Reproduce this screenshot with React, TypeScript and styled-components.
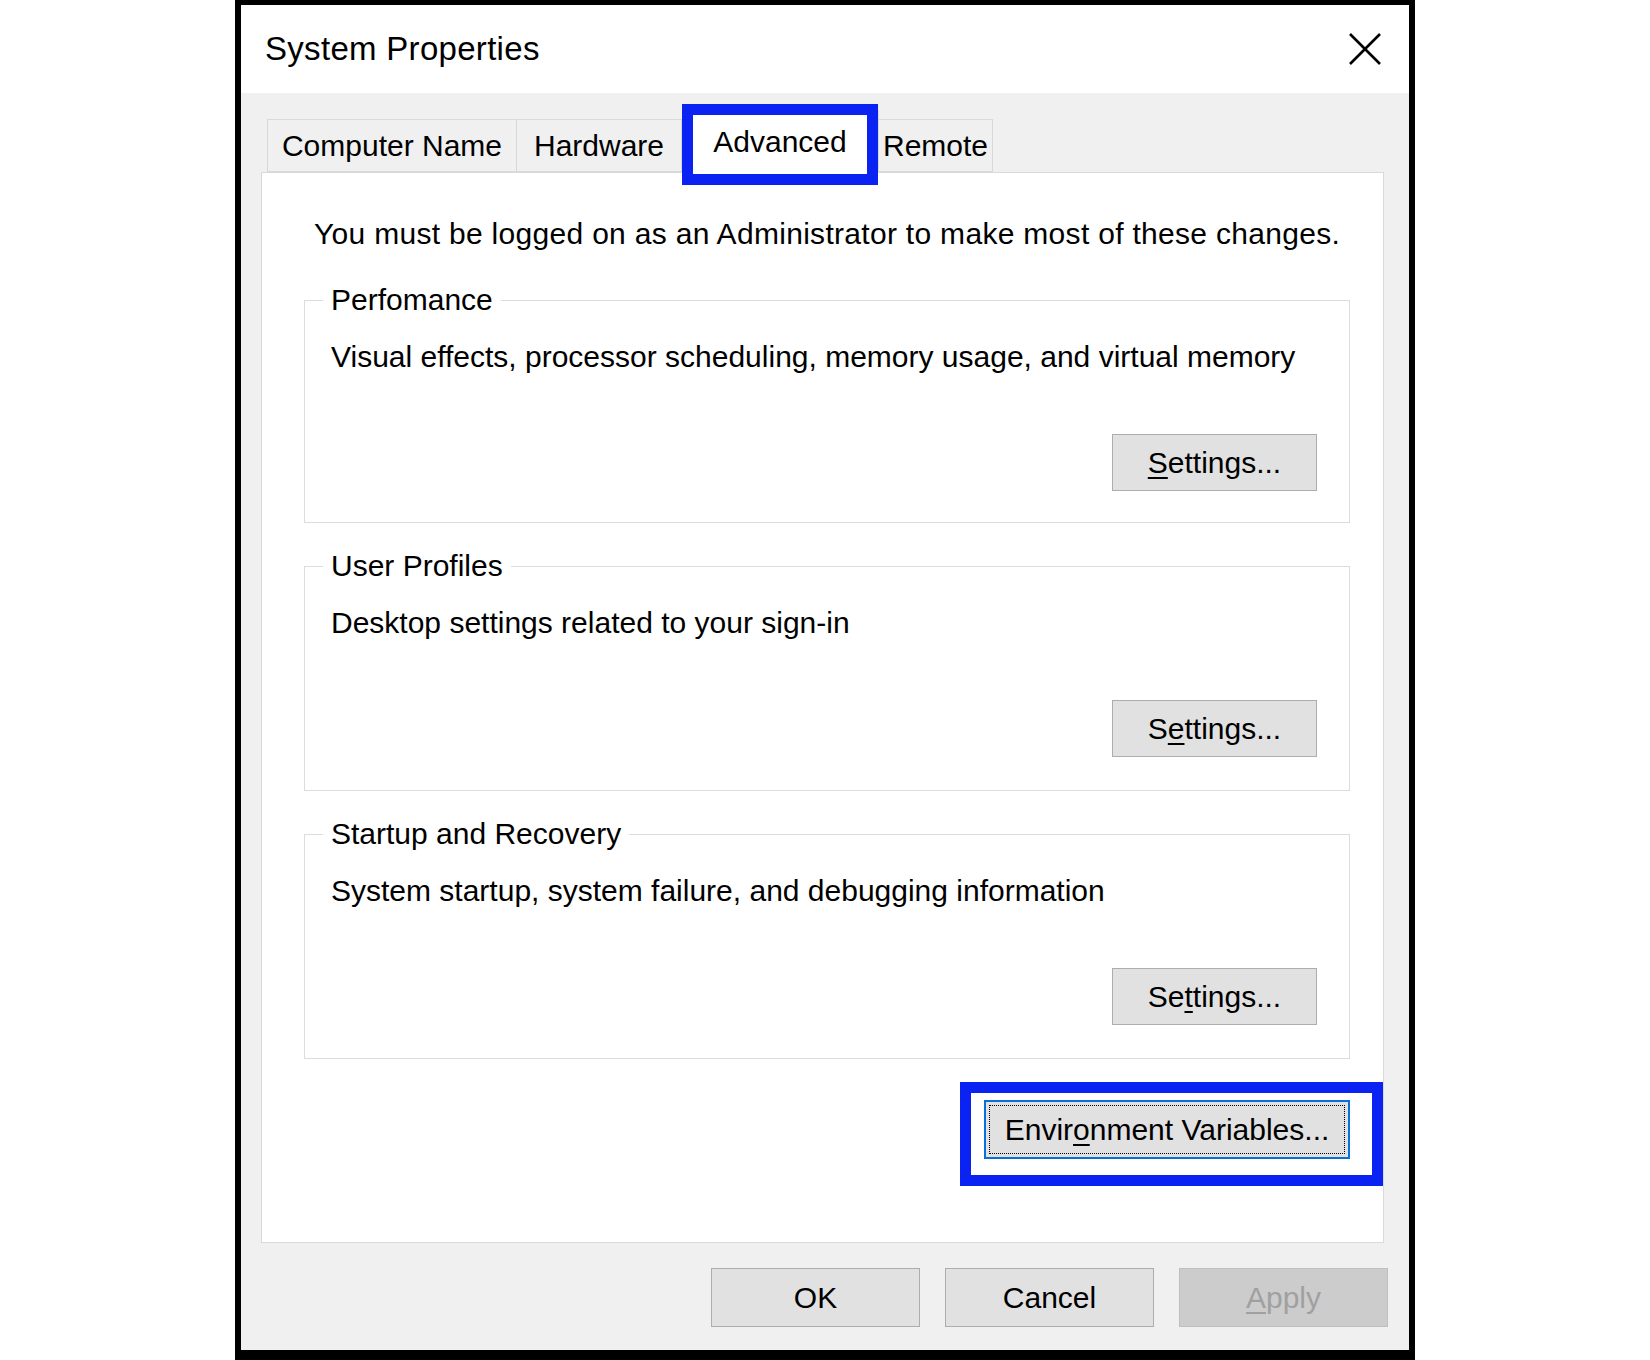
import React from "react";
import styled, { createGlobalStyle } from "styled-components";

const GlobalStyle = createGlobalStyle`
  body {
    margin: 0;
    background: #fff;
    font-family: "Liberation Sans", Arial, sans-serif;
    color: #000;
  }
`;

const groups = [
  {
    title: "Perfomance",
    desc: "Visual effects, processor scheduling, memory usage, and virtual memory",
    key: 0,
  },
  {
    title: "User Profiles",
    desc: "Desktop settings related to your sign-in",
    key: 1,
  },
  {
    title: "Startup and Recovery",
    desc: "System startup, system failure, and debugging information",
    key: 2,
  },
];

const tabs = [
  { label: "Computer Name", w: 250 },
  { label: "Hardware", w: 165 },
  { label: "Advanced", w: 197, active: true },
  { label: "Remote", w: 114 },
];

// label with the access key underlined at a given index
const Accel = ({ text, at }: { text: string; at: number }) => (
  <>
    {text.slice(0, at)}
    <Key>{text[at]}</Key>
    {text.slice(at + 1)}
  </>
);

const CloseIcon = () => (
  <svg width="32" height="32" viewBox="0 0 32 32">
    <path d="M1 1 L31 31 M31 1 L1 31" stroke="#000" strokeWidth="2.6" fill="none" />
  </svg>
);

const App = () => {
  return (
    <Page>
      <GlobalStyle />
      <Window>
        <TitleBar>
          <Title>System Properties</Title>
          <CloseIcon />
        </TitleBar>
        <Body>
          <TabStrip>
            {tabs.map((t) => (
              <Tab key={t.label} $w={t.w} $active={t.active}>
                {t.label}
                {t.active && <Highlight $top={-7} $right={0} $bottom={-12} $left={0} />}
              </Tab>
            ))}
          </TabStrip>
          <Panel>
            <AdminText>
              You must be logged on as an Administrator to make most of these changes.
            </AdminText>
            {groups.map((g) => (
              <GroupBox key={g.key} $first={g.key === 0}>
                <Legend>{g.title}</Legend>
                <Desc>{g.desc}</Desc>
                <ButtonRow>
                  <Button>
                    <Accel text="Settings..." at={g.key} />
                  </Button>
                </ButtonRow>
              </GroupBox>
            ))}
            <EnvRow>
              <EnvButton>
                <FocusRect />
                <Accel text="Environment Variables..." at={5} />
                <Highlight $top={-20} $right={-35} $bottom={-29} $left={-26} />
              </EnvButton>
            </EnvRow>
          </Panel>
          <Footer>
            <DialogButton>OK</DialogButton>
            <DialogButton>Cancel</DialogButton>
            <DialogButton $disabled>
              <Accel text="Apply" at={0} />
            </DialogButton>
          </Footer>
        </Body>
      </Window>
    </Page>
  );
};

export default App;

const Page = styled.div`
  display: flex;
  justify-content: center;
`;

const Window = styled.div`
  box-sizing: border-box;
  width: 1180px;
  height: 1360px;
  border: 6px solid #000;
  border-top-width: 5px;
  border-bottom-width: 10px;
  display: flex;
  flex-direction: column;
`;

const TitleBar = styled.div`
  height: 88px;
  flex-shrink: 0;
  background: #fff;
  display: flex;
  align-items: center;
  justify-content: space-between;
  padding: 0 28px 0 24px;
`;

const Title = styled.div`
  font-size: 33px;
  letter-spacing: 0.3px;
`;

const Body = styled.div`
  flex: 1;
  background: #f0f0f0;
  padding: 17px 25px 0 20px;
  display: flex;
  flex-direction: column;
`;

const TabStrip = styled.div`
  display: flex;
  align-items: flex-end;
  height: 62px;
  padding-left: 6px;
  position: relative;
  z-index: 1;
`;

const Tab = styled.div<{ $w: number; $active?: boolean }>`
  box-sizing: border-box;
  position: relative;
  width: ${(p) => p.$w}px;
  height: ${(p) => (p.$active ? 63 : 53)}px;
  margin-bottom: ${(p) => (p.$active ? -1 : 0)}px;
  display: flex;
  align-items: center;
  justify-content: center;
  font-size: 30px;
  background: ${(p) => (p.$active ? "#fff" : "#f0f0f0")};
  border: 1px solid #d9d9d9;
  border-bottom: ${(p) => (p.$active ? "none" : "1px solid #d9d9d9")};
  & + & {
    border-left: none;
  }
`;

const Highlight = styled.div<{ $top: number; $right: number; $bottom: number; $left: number }>`
  position: absolute;
  top: ${(p) => p.$top}px;
  right: ${(p) => p.$right}px;
  bottom: ${(p) => p.$bottom}px;
  left: ${(p) => p.$left}px;
  border: 11px solid #0a22f2;
  pointer-events: none;
`;

const Panel = styled.div`
  background: #fff;
  border: 1px solid #d9d9d9;
  padding: 43px 33px 83px 42px;
  display: flex;
  flex-direction: column;
`;

const AdminText = styled.div`
  font-size: 30px;
  line-height: 36px;
  padding-left: 10px;
  letter-spacing: 0.3px;
`;

const GroupBox = styled.fieldset<{ $first?: boolean }>`
  margin: ${(p) => (p.$first ? 31 : 26)}px 0 0;
  border: 1px solid #dcdcdc;
  padding: 0 32px ${(p) => (p.$first ? 31 : 33)}px 26px;
  min-inline-size: 0;
`;

const Legend = styled.legend`
  font-size: 30px;
  line-height: 34px;
  padding: 0 8px;
  margin-left: -8px;
`;

const Desc = styled.div`
  font-size: 30px;
  line-height: 34px;
  margin-top: 23px;
`;

const ButtonRow = styled.div`
  display: flex;
  justify-content: flex-end;
  margin-top: 60px;
`;

const Btn = styled.div`
  box-sizing: border-box;
  display: flex;
  align-items: center;
  justify-content: center;
  font-size: 30px;
  background: #e1e1e1;
  border: 1px solid #adadad;
  color: #000;
`;

const Button = styled(Btn)`
  width: 205px;
  height: 57px;
`;

const Key = styled.span`
  text-decoration: underline;
  text-decoration-thickness: 2px;
  text-underline-offset: 4px;
`;

const EnvRow = styled.div`
  display: flex;
  justify-content: flex-end;
  margin-top: 41px;
`;

const EnvButton = styled(Btn)`
  position: relative;
  width: 366px;
  height: 59px;
  border: 2px solid #0a6fd8;
`;

const FocusRect = styled.span`
  position: absolute;
  inset: 3px;
  border: 1px dotted #000;
`;

const Footer = styled.div`
  display: flex;
  justify-content: flex-end;
  gap: 25px;
  margin: 25px -4px 0 0;
`;

const DialogButton = styled(Btn)<{ $disabled?: boolean }>`
  width: 209px;
  height: 59px;
  background: ${(p) => (p.$disabled ? "#cccccc" : "#e1e1e1")};
  border-color: ${(p) => (p.$disabled ? "#bfbfbf" : "#adadad")};
  color: ${(p) => (p.$disabled ? "#a0a0a0" : "#000")};
`;
